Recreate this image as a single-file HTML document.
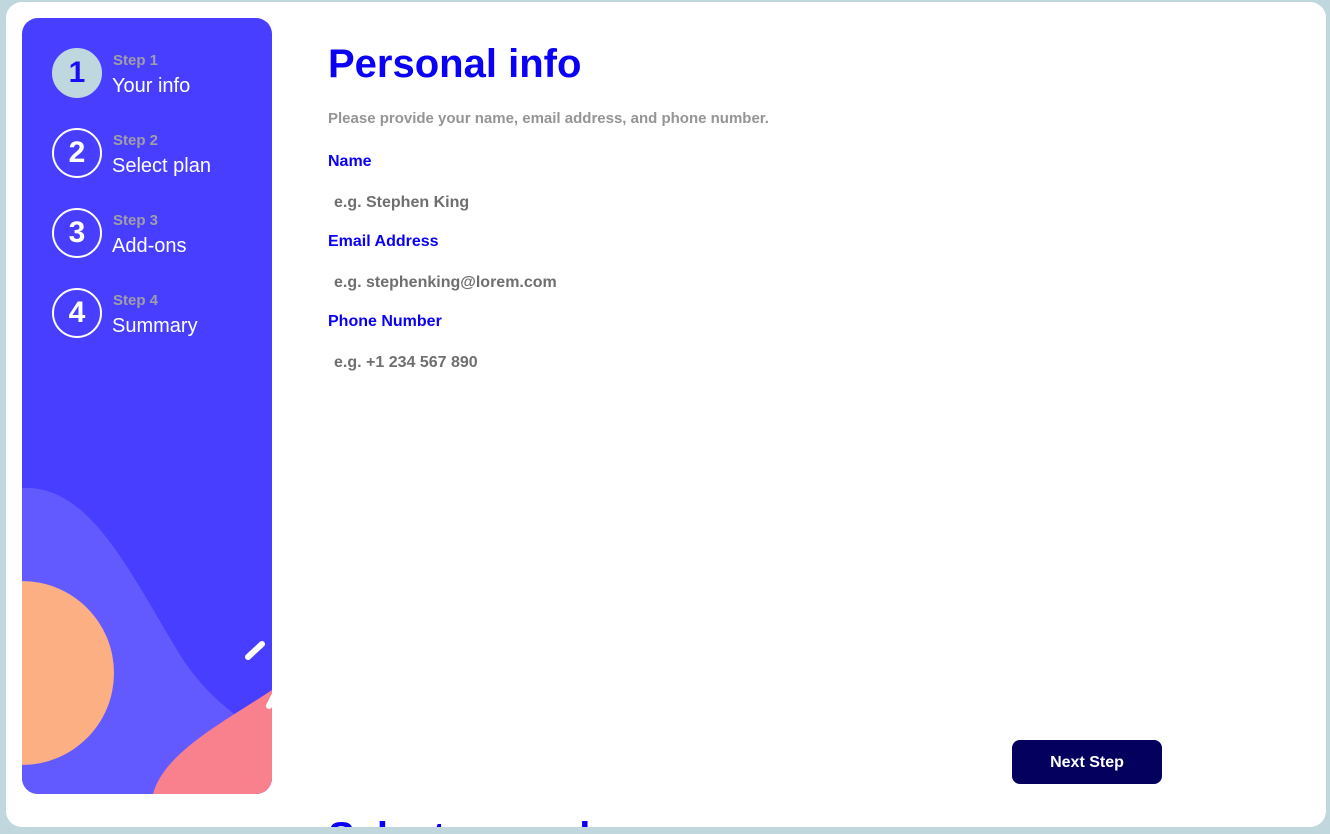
<!DOCTYPE html>
<html><head><style>
*{margin:0;padding:0;box-sizing:border-box}
body{width:1330px;height:834px;background:#c0d7dd;font-family:"Liberation Sans",Arial,sans-serif;position:relative;overflow:hidden}
.card{position:absolute;left:6px;top:2px;width:1320px;height:825px;background:#fff;border-radius:16px;overflow:hidden}
.side{position:absolute;left:16px;top:16px;width:250px;height:776px;background:#483eff;border-radius:16px;overflow:hidden}
.step{position:absolute;left:30px}
.circ{position:absolute;left:0;top:0;width:50px;height:50px;border:2px solid #fff;border-radius:50%;color:#fff;font-weight:bold;font-size:30px;text-align:center;line-height:46px}
.circ.act{background:#bfd8e0;border-color:#bfd8e0;color:#1a0cf5}
.sl{position:absolute;left:61px;top:4px;color:#a09ea8;font-weight:bold;font-size:15px;white-space:nowrap}
.st{position:absolute;left:60px;top:27px;color:#fff;font-size:20px;white-space:nowrap}
.m{position:absolute;left:322px;white-space:nowrap}
h1{position:absolute;left:322px;top:40px;font-size:40px;color:#0b00f7;font-weight:bold}
.sub{top:108px;font-size:15px;color:#959595;font-weight:bold}
.lab{font-size:16px;color:#0b00f7;font-weight:bold}
.ph{left:328px;font-size:16px;color:#6f6f6f;font-weight:bold}
.btn{position:absolute;left:1006px;top:738px;width:150px;height:44px;background:#03005e;border-radius:8px;color:#fff;font-weight:bold;font-size:16px;text-align:center;line-height:46px}
</style></head><body>
<div class="card">
<div class="side">
<svg width="250" height="776" style="position:absolute;left:0;top:0">
<path d="M0,470 C70,466 110,560 160,640 C185,678 215,700 250,722 L250,776 L0,776 Z" fill="#6259ff"/>
<circle cx="0" cy="655" r="92" fill="#fcaf83"/>
<path d="M131,776 C142,735 200,705 250,672 L250,776 Z" fill="#f9818e"/>
<line x1="226" y1="639" x2="240" y2="626" stroke="#fff" stroke-width="6" stroke-linecap="round"/>
<line x1="247" y1="688" x2="252" y2="678" stroke="#fff" stroke-width="6" stroke-linecap="round"/>
</svg>
<div class="step" style="top:30px"><div class="circ act">1</div><div class="sl">Step 1</div><div class="st">Your info</div></div>
<div class="step" style="top:110px"><div class="circ">2</div><div class="sl">Step 2</div><div class="st">Select plan</div></div>
<div class="step" style="top:190px"><div class="circ">3</div><div class="sl">Step 3</div><div class="st">Add-ons</div></div>
<div class="step" style="top:270px"><div class="circ">4</div><div class="sl">Step 4</div><div class="st">Summary</div></div>
</div>
<h1>Personal info</h1>
<div class="m sub">Please provide your name, email address, and phone number.</div>
<div class="m lab" style="top:151px">Name</div>
<div class="m ph" style="top:192px">e.g. Stephen King</div>
<div class="m lab" style="top:231px">Email Address</div>
<div class="m ph" style="top:272px">e.g. stephenking@lorem.com</div>
<div class="m lab" style="top:311px">Phone Number</div>
<div class="m ph" style="top:352px">e.g. +1 234 567 890</div>
<div class="btn">Next Step</div>
<div class="m" style="top:813px;font-size:40px;color:#0b00f7;font-weight:bold">Select your plan</div>
</div>
</body></html>
